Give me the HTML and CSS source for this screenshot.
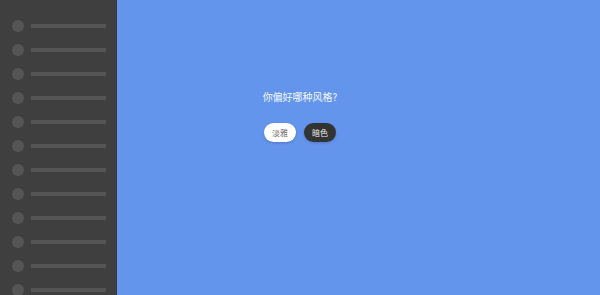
FILE: index.html
```html
<!DOCTYPE html>
<html lang="zh">
<head>
<meta charset="utf-8">
<link rel="stylesheet" href="styles.css">
</head>
<body>
<div class="app">
  <aside class="sidebar">
    <div class="row"><span class="dot"></span><span class="bar"></span></div>
    <div class="row"><span class="dot"></span><span class="bar"></span></div>
    <div class="row"><span class="dot"></span><span class="bar"></span></div>
    <div class="row"><span class="dot"></span><span class="bar"></span></div>
    <div class="row"><span class="dot"></span><span class="bar"></span></div>
    <div class="row"><span class="dot"></span><span class="bar"></span></div>
    <div class="row"><span class="dot"></span><span class="bar"></span></div>
    <div class="row"><span class="dot"></span><span class="bar"></span></div>
    <div class="row"><span class="dot"></span><span class="bar"></span></div>
    <div class="row"><span class="dot"></span><span class="bar"></span></div>
    <div class="row"><span class="dot"></span><span class="bar"></span></div>
    <div class="row"><span class="dot"></span><span class="bar"></span></div>
  </aside>
  <main class="main">
    <p class="question">你偏好哪种风格?</p>
    <div class="choices">
      <button class="pill light">淡雅</button>
      <button class="pill dark">暗色</button>
    </div>
  </main>
</div>
</body>
</html>
```

FILE: styles.css
```css
html, body {
  margin: 0;
  padding: 0;
  height: 100%;
  overflow: hidden;
}
body {
  font-family: "Noto Sans CJK SC", "Noto Sans", sans-serif;
}
.app {
  display: flex;
  height: 295px;
}
.sidebar {
  width: 104px;
  flex: none;
  background: #3f3f3f;
  border-right: 1px solid #383838;
  display: flex;
  flex-direction: column;
  gap: 12px;
  padding: 20px 0 0 12px;
  box-sizing: content-box;
  overflow: hidden;
}
.row {
  display: flex;
  align-items: center;
  gap: 7px;
  height: 12px;
  flex: none;
}
.dot {
  width: 12px;
  height: 12px;
  border-radius: 50%;
  background: #555555;
  flex: none;
}
.bar {
  width: 75px;
  height: 4px;
  background: #555555;
  flex: none;
}
.main {
  flex: 1;
  background: #6495ed;
  display: flex;
  flex-direction: column;
  align-items: center;
  padding: 90px 117px 0 0;
}
.question {
  margin: 0;
  font-size: 10px;
  line-height: 14px;
  color: #f4f7fd;
}
.choices {
  display: flex;
  gap: 8px;
  margin-top: 19px;
}
.pill {
  width: 32px;
  height: 19px;
  border: none;
  border-radius: 10px;
  padding: 0;
  font-family: inherit;
  font-size: 8px;
  line-height: 19px;
  box-shadow: 0 1px 3px rgba(0, 0, 0, 0.2);
}
.light {
  background: #ffffff;
  color: #666666;
}
.dark {
  background: #333333;
  color: #eeeeee;
}
```
